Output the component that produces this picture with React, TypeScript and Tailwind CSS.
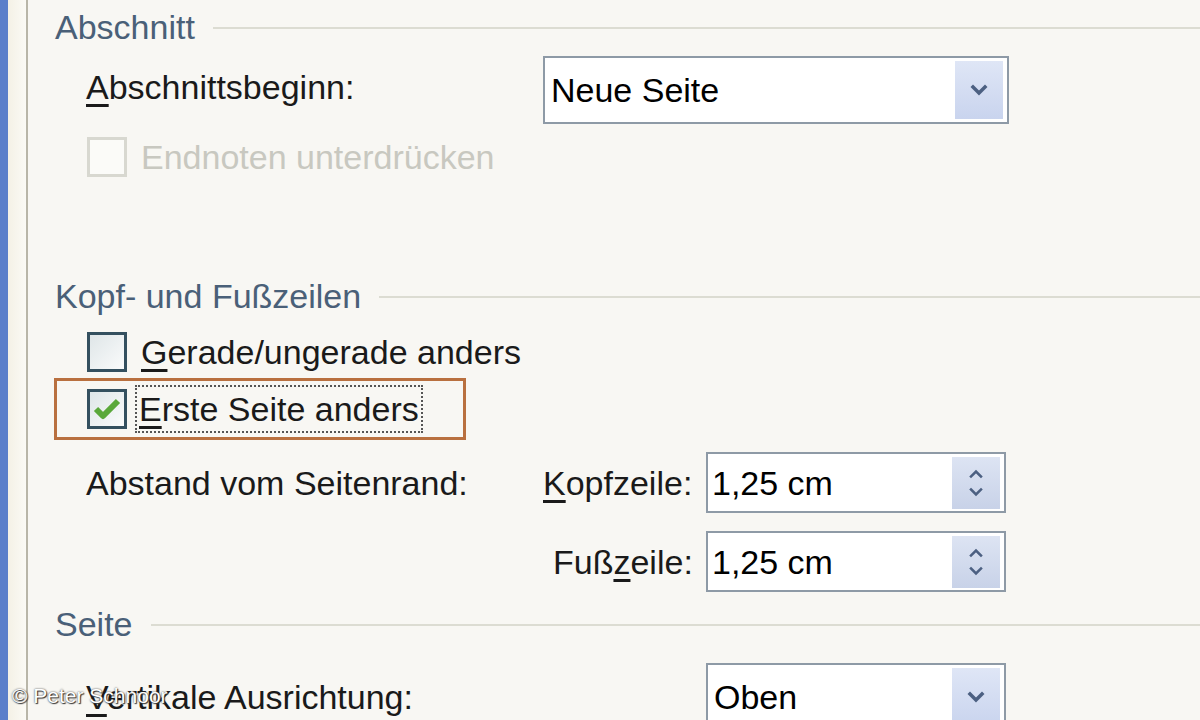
import React from 'react';

const font = { fontFamily: '"Liberation Sans", Arial, sans-serif' };

function SectionHeader({ title }: { title: string }) {
  return (
    <div className="flex items-center gap-[18px] pl-[27px] h-[38px]">
      <span className="text-[#4a6078] whitespace-nowrap">{title}</span>
      <div className="flex-1 h-[2px] bg-[#dcdcd2] mt-[2px]" />
    </div>
  );
}

function Chevron({ up = false, small = false }: { up?: boolean; small?: boolean }) {
  return (
    <svg width="18" height={small ? 10 : 12} viewBox="0 0 18 12" className={up ? 'rotate-180' : ''}>
      <path d="M3 3 L9 9 L15 3" fill="none" stroke="#4c6082" strokeWidth={small ? 3 : 3.5} strokeLinecap="square" />
    </svg>
  );
}

function Dropdown({ value, width }: { value: string; width: string }) {
  return (
    <div className={`${width} h-[68px] shrink-0 border-2 border-[#8e9aa6] bg-white flex items-center pl-[6px] pr-[4px]`}>
      <span className="flex-1 text-black">{value}</span>
      <div className="w-[48px] h-[58px] bg-gradient-to-b from-[#dfe6f6] to-[#c9d4ee] flex items-center justify-center">
        <Chevron />
      </div>
    </div>
  );
}

function Spin({ value }: { value: string }) {
  return (
    <div className="w-[300px] h-[61px] shrink-0 border-2 border-[#8e9aa6] bg-white flex items-center pl-[4px] pr-[4px]">
      <span className="flex-1 text-black">{value}</span>
      <div className="w-[48px] h-[52px] bg-gradient-to-b from-[#dde4f3] to-[#c8d2e8] flex flex-col items-center justify-center gap-[8px]">
        <Chevron up small />
        <Chevron small />
      </div>
    </div>
  );
}

function Checkbox({ checked = false, disabled = false }: { checked?: boolean; disabled?: boolean }) {
  return (
    <div
      className={`w-[40px] h-[40px] shrink-0 border-[3px] flex items-center justify-center ${
        disabled ? 'border-[#d8d8d0] bg-[#fbfbf8]' : 'border-[#34505f] bg-gradient-to-br from-[#dfe6e8] to-[#fafbfb]'
      }`}
    >
      {checked && (
        <svg width="30" height="26" viewBox="0 0 30 26">
          <path d="M4 13 L11 20 L26 5" fill="none" stroke="#5aa83a" strokeWidth="6" strokeLinejoin="round" />
        </svg>
      )}
    </div>
  );
}

export default function App() {
  return (
    <div className="w-[1200px] h-[720px] overflow-hidden flex bg-[#f8f7f3] text-[34px] leading-none" style={font}>
      <div className="w-[8px] bg-[#5b7fca]" />
      <div className="w-[18px] bg-gradient-to-r from-[#f4f1e6] to-[#fbfaf5]" />
      <div className="w-[2px] bg-[#b9b6a8]" />
      <div className="flex-1 pt-[8px]">
        <SectionHeader title="Abschnitt" />

        <div className="flex items-center h-[68px] mt-[10px] pl-[58px]">
          <span className="w-[457px] text-[#1a1a1a] -mt-[6px]">
            <span className="underline underline-offset-[5px]">A</span>bschnittsbeginn:
          </span>
          <Dropdown value="Neue Seite" width="w-[466px]" />
        </div>

        <div className="flex items-center gap-[14px] h-[40px] mt-[13px] pl-[59px]">
          <Checkbox disabled />
          <span className="text-[#c8c8c0]">Endnoten unterdrücken</span>
        </div>

        <div className="h-[100px]" />

        <SectionHeader title="Kopf- und Fußzeilen" />

        <div className="flex items-center gap-[14px] h-[40px] mt-[17px] pl-[59px]">
          <Checkbox />
          <span className="text-[#1a1a1a]">
            <span className="underline underline-offset-[5px]">G</span>erade/ungerade anders
          </span>
        </div>

        <div className="ml-[26px] mt-[6px] w-[412px] h-[62px] border-[3px] border-[#b9703f] flex items-center gap-[8px] pl-[30px]">
          <Checkbox checked />
          <span className="text-[#1a1a1a] border-2 border-dotted border-[#555] px-[2px] h-[48px] flex items-center whitespace-nowrap">
            <span className="underline underline-offset-[5px]">E</span>rste Seite anders
          </span>
        </div>

        <div className="flex items-center h-[61px] mt-[12px] pl-[58px]">
          <span className="w-[457px] text-[#1a1a1a]">Abstand vom Seitenrand:</span>
          <span className="w-[163px] text-[#1a1a1a]">
            <span className="underline underline-offset-[5px]">K</span>opfzeile:
          </span>
          <Spin value="1,25 cm" />
        </div>

        <div className="flex items-center h-[61px] mt-[18px] pl-[58px]">
          <span className="w-[467px]" />
          <span className="w-[153px] text-[#1a1a1a]">
            Fuß<span className="underline underline-offset-[5px]">z</span>eile:
          </span>
          <Spin value="1,25 cm" />
        </div>

        <div className="mt-[13px]">
          <SectionHeader title="Seite" />
        </div>

        <div className="flex items-center h-[68px] mt-[20px] pl-[58px] relative">
          <span className="w-[620px] text-[#1a1a1a]">
            <span className="underline underline-offset-[5px]">V</span>ertikale Ausrichtung:
          </span>
          <Dropdown value="Oben" width="w-[300px]" />
          <span
            className="absolute left-[-16px] top-[22px] text-[21px] text-white whitespace-nowrap"
            style={{ textShadow: '0 0 2px #333, 1px 1px 1px #333' }}
          >
            © Peter Schnoor
          </span>
        </div>
      </div>
    </div>
  );
}
